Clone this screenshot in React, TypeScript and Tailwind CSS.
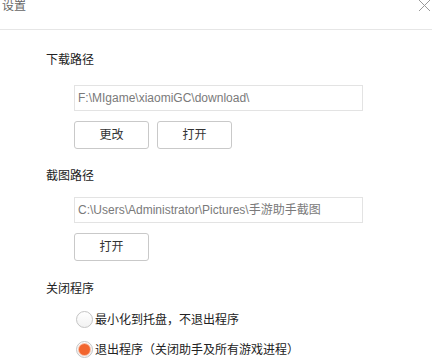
import React, { useState } from 'react';

const FONT = { fontFamily: "'Liberation Sans', 'Noto Sans CJK SC', sans-serif" };

function PathBox({ value }: { value: string }) {
  return (
    <div className="ml-[28px] w-[289px] h-[26px] border border-[#e3e3e3] bg-white flex items-center pl-[3px] text-[12px] text-[#7a7a7a] whitespace-nowrap overflow-hidden">
      {value}
    </div>
  );
}

function Btn({ children }: { children: React.ReactNode }) {
  return (
    <button className="w-[75px] h-[28px] rounded-[3px] border border-[#c9c9c9] bg-white text-[12px] text-[#333] flex items-center justify-center">
      {children}
    </button>
  );
}

function Radio({ checked, label, onClick }: { checked: boolean; label: string; onClick: () => void }) {
  return (
    <div className="flex items-center ml-[30px] cursor-pointer" onClick={onClick}>
      <span className="w-[17px] h-[17px] rounded-full border border-[#c4c4c4] bg-gradient-to-b from-white to-[#f2f2f2] flex items-center justify-center">
        {checked && <span className="w-[11px] h-[11px] rounded-full bg-[#f2652e] ring-1 ring-[#f8b9a0]" />}
      </span>
      <span className="ml-[2px] text-[12px] leading-[12px] text-[#222]">{label}</span>
    </div>
  );
}

export default function App() {
  const [exitMode, setExitMode] = useState<'tray' | 'quit'>('quit');

  return (
    <div className="w-[432px] h-[358px] bg-white overflow-hidden" style={FONT}>
      <div className="h-[30px] border-b border-[#e6e6e6] flex justify-between items-start">
        <span className="ml-[2px] text-[12px] leading-[13px] text-[#666]">设置</span>
        <svg width="13" height="12" viewBox="0 0 13 12" className="mr-[1px]">
          <path d="M1 0 L12 11 M12 0 L1 11" stroke="#9a9a9a" strokeWidth="1" fill="none" />
        </svg>
      </div>

      <div className="pl-[46px] flex flex-col items-start">
        <div className="mt-[24px] text-[12px] leading-[12px] text-[#222]">下载路径</div>
        <div className="mt-[19px]">
          <PathBox value="F:\MIgame\xiaomiGC\download\" />
        </div>
        <div className="mt-[10px] ml-[28px] flex gap-[8px]">
          <Btn>更改</Btn>
          <Btn>打开</Btn>
        </div>

        <div className="mt-[21px] text-[12px] leading-[12px] text-[#222]">截图路径</div>
        <div className="mt-[15px]">
          <PathBox value="C:\Users\Administrator\Pictures\手游助手截图" />
        </div>
        <div className="mt-[10px] ml-[28px] flex">
          <Btn>打开</Btn>
        </div>

        <div className="mt-[22px] text-[12px] leading-[12px] text-[#222]">关闭程序</div>
        <div className="mt-[16px]">
          <Radio checked={exitMode === 'tray'} label="最小化到托盘，不退出程序" onClick={() => setExitMode('tray')} />
        </div>
        <div className="mt-[13px]">
          <Radio checked={exitMode === 'quit'} label="退出程序（关闭助手及所有游戏进程）" onClick={() => setExitMode('quit')} />
        </div>
      </div>
    </div>
  );
}
